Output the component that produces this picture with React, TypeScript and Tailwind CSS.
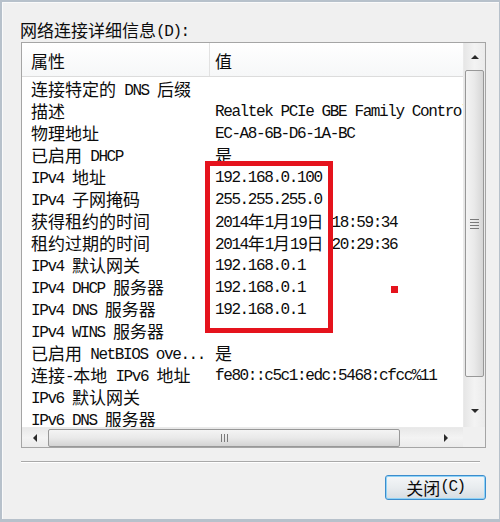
import React from "react";

const CJK = /([\u2e80-\u9fff\uff00-\uffef\u3000-\u303f]+)/;

function T({ s }: { s: string }) {
  const parts = s.split(CJK).filter((p) => p.length > 0);
  return (
    <>
      {parts.map((p, i) =>
        CJK.test(p) ? (
          <span key={i} className="font-['Noto_Sans_CJK_SC',sans-serif] text-[17px]">
            {p}
          </span>
        ) : (
          <span
            key={i}
            className="relative top-[-1px] font-['Liberation_Mono',monospace] text-[16px] tracking-[-1.4px]"
          >
            {p}
          </span>
        )
      )}
    </>
  );
}

const rows: [string, string][] = [
  ["连接特定的 DNS 后缀", ""],
  ["描述", "Realtek PCIe GBE Family Controller"],
  ["物理地址", "EC-A8-6B-D6-1A-BC"],
  ["已启用 DHCP", "是"],
  ["IPv4 地址", "192.168.0.100"],
  ["IPv4 子网掩码", "255.255.255.0"],
  ["获得租约的时间", "2014年1月19日 18:59:34"],
  ["租约过期的时间", "2014年1月19日 20:29:36"],
  ["IPv4 默认网关", "192.168.0.1"],
  ["IPv4 DHCP 服务器", "192.168.0.1"],
  ["IPv4 DNS 服务器", "192.168.0.1"],
  ["IPv4 WINS 服务器", ""],
  ["已启用 NetBIOS ove...", "是"],
  ["连接-本地 IPv6 地址", "fe80::c5c1:edc:5468:cfcc%11"],
  ["IPv6 默认网关", ""],
  ["IPv6 DNS 服务器", ""],
];

function Arrow({ dir }: { dir: "up" | "down" | "left" | "right" }) {
  const pts =
    dir === "up"
      ? "0,5 4,1 8,5"
      : dir === "down"
      ? "0,1 8,1 4,5"
      : dir === "left"
      ? "5,0 5,8 1,4"
      : "1,0 1,8 5,4";
  const w = dir === "up" || dir === "down" ? 8 : 6;
  const h = dir === "up" || dir === "down" ? 6 : 8;
  return (
    <svg width={w} height={h} viewBox={`0 0 ${w} ${h}`}>
      <polygon points={pts} fill="#2a2a2a" />
    </svg>
  );
}

export default function App() {
  return (
    <div className="relative w-[500px] h-[522px] bg-[#b7c1cb] pl-[2px] pt-[2px] pb-[3px] pr-[1px] text-[#0c0c0c]">
      <div className="w-full h-full bg-[#f0f0f0] border-l border-t border-[#fafafa] flex flex-col pl-[17px] pt-[17px]">
        {/* label */}
        <div className="h-[20px] leading-[20px] whitespace-pre">
          <T s="网络连接详细信息(D):" />
        </div>

        {/* list box */}
        <div className="mt-[2px] ml-[1px] w-[465px] h-[406px] border border-[#a5a5a5] bg-white flex flex-col">
          <div className="flex h-[384px]">
            {/* content */}
            <div className="w-[441px] h-full overflow-hidden">
              <div className="flex h-[34px] border-b border-[#dcdcdc] bg-gradient-to-b from-white to-[#f6f7f8] items-center leading-[22px] whitespace-pre">
                <div className="w-[188px] h-full border-r border-[#e2e2e2] pl-[9px] flex items-center pt-[3px]">
                  <T s="属性" />
                </div>
                <div className="pl-[5px] h-full flex items-center pt-[3px]">
                  <T s="值" />
                </div>
              </div>
              <div className="pt-[1px]">
                {rows.map(([k, v], i) => (
                  <div key={i} className="flex h-[22px] leading-[22px] whitespace-pre">
                    <div className="w-[193px] pl-[9px] shrink-0">
                      <T s={k} />
                    </div>
                    <div className="shrink-0">
                      <T s={v} />
                    </div>
                  </div>
                ))}
              </div>
            </div>
            {/* vertical scrollbar */}
            <div className="w-[22px] h-full bg-gradient-to-r from-[#e6e6e6] via-[#f3f3f3] to-[#ebebeb] border-l border-[#eaeaea] flex flex-col">
              <div className="h-[26px] flex items-center justify-center pt-[1px]">
                <Arrow dir="up" />
              </div>
              <div className="flex-1 flex flex-col">
                <div className="mt-[1px] h-[307px] mx-[1px] rounded-[2px] border border-[#989898] bg-gradient-to-r from-[#f4f4f4] via-[#e9e9e9] to-[#d6d6d6] flex items-center justify-center">
                  <div className="flex flex-col gap-[2px]">
                    <div className="w-[9px] h-px bg-[#7a7a7a]" />
                    <div className="w-[9px] h-px bg-[#7a7a7a]" />
                    <div className="w-[9px] h-px bg-[#7a7a7a]" />
                    <div className="w-[9px] h-px bg-[#7a7a7a]" />
                  </div>
                </div>
              </div>
              <div className="h-[33px] flex items-center justify-center">
                <Arrow dir="down" />
              </div>
            </div>
          </div>
          {/* horizontal scrollbar */}
          <div className="flex h-[20px]">
            <div className="w-[441px] h-full bg-gradient-to-b from-[#e8e8e8] via-[#f3f3f3] to-[#ebebeb] border-t border-[#eaeaea] flex items-center">
              <div className="w-[25px] h-full flex items-center justify-center">
                <Arrow dir="left" />
              </div>
              <div className="ml-[1px] w-[352px] h-[18px] rounded-[2px] border border-[#989898] bg-gradient-to-b from-[#f4f4f4] via-[#e9e9e9] to-[#d3d3d3] flex items-center justify-center">
                <div className="flex gap-[2px]">
                  <div className="w-px h-[8px] bg-[#7a7a7a]" />
                  <div className="w-px h-[8px] bg-[#7a7a7a]" />
                  <div className="w-px h-[8px] bg-[#7a7a7a]" />
                </div>
              </div>
              <div className="flex-1 h-full flex items-center justify-end pr-[14px]">
                <Arrow dir="right" />
              </div>
            </div>
            <div className="w-[22px] h-full bg-[#f0f0f0]" />
          </div>
        </div>

        {/* separator */}
        <div className="mt-[13px] ml-[1px] w-[459px] h-[2px] border-t border-[#a9a9a9] border-b border-b-white" />

        {/* button */}
        <div className="mt-[12px] w-[466px] flex justify-end">
          <div className="w-[101px] h-[25px] rounded-[3px] border border-[#3c8ccc] shadow-[inset_0_0_0_1px_#8fd3f7] bg-gradient-to-b from-[#f4f6f8] via-[#e8ecef] to-[#d6dde3] flex items-center justify-center leading-[20px] whitespace-pre">
            <T s="关闭(C)" />
          </div>
        </div>
      </div>

      {/* red highlight overlays */}
      <div className="absolute left-[205px] top-[161px] w-[128px] h-[172px] border-[5px] border-[#e5131d]" />
      <div className="absolute left-[391px] top-[286px] w-[7px] h-[7px] bg-[#e5131d]" />
    </div>
  );
}
